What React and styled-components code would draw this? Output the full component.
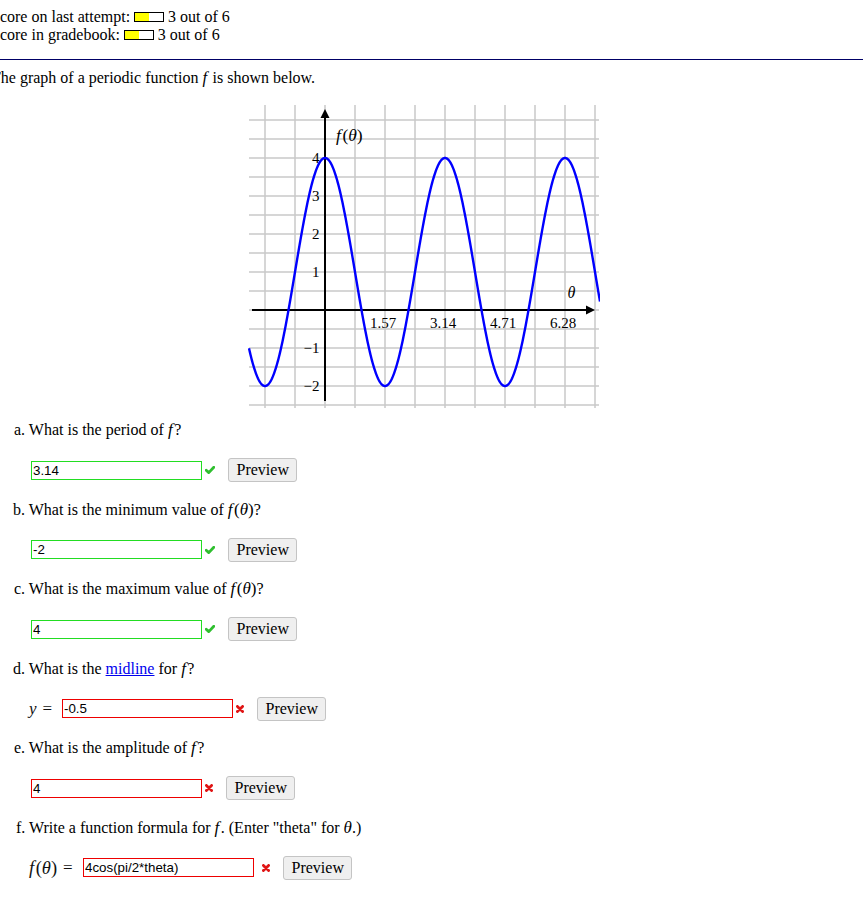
import React from "react";
import styled, { createGlobalStyle } from "styled-components";

const Global = createGlobalStyle`
  html, body { margin: 0; padding: 0; background: #fff; }
  body { font-family: "Liberation Serif", "Times New Roman", serif; font-size: 16px; color: #000; overflow: hidden; }
`;

const Page = styled.div`
  width: 863px;
  padding-top: 8px;
`;

const Header = styled.div`
  margin-left: -9px;
  line-height: 17.5px;
`;

const ScoreLine = styled.div`
  white-space: nowrap;
`;

const Bar = styled.span`
  display: inline-block;
  box-sizing: border-box;
  width: 30px;
  height: 10px;
  border: 1px solid #000;
  background: #fff;
  overflow: hidden;
`;

const BarFill = styled.span`
  display: block;
  height: 100%;
  background: #ffff00;
`;

const Rule = styled.div`
  margin-top: 16px;
  margin-bottom: 9px;
  border-top: 1px solid #000066;
`;

const Intro = styled.div`
  margin-left: -9px;
  line-height: 17.5px;
`;

const M = styled.span`
  font-style: italic;
  font-family: "Liberation Serif", "Times New Roman", serif;
  font-size: ${(p) => p.$size || 17}px;
  padding-right: ${(p) => (p.$pad ? 1.5 : 0)}px;
`;

const Up = styled.span`
  font-size: ${(p) => p.$size || 17}px;
`;

const GraphWrap = styled.div`
  margin-top: 17px;
  padding-left: 248px;
  height: 306px;
`;

const Questions = styled.div`
  margin-top: 11.5px;
`;

const Question = styled.div`
  margin-bottom: ${(p) => p.$after}px;
`;

const Label = styled.div`
  padding-left: ${(p) => p.$indent}px;
  line-height: 18px;
  height: 18px;
  white-space: nowrap;
`;

const Link = styled.a`
  color: #0000ee;
  text-decoration: underline;
`;

const Row = styled.div`
  margin-top: ${(p) => p.$top}px;
  height: 24px;
  display: flex;
  align-items: center;
  padding-left: 30px;
`;

const Prefix = styled.span`
  display: flex;
  align-items: center;
  width: ${(p) => p.$w}px;
  margin-left: -1px;
  flex: none;
  color: #111;
  white-space: nowrap;
  line-height: 20px;
`;

const Eq = styled.span`
  margin-left: ${(p) => p.$gap}px;
  font-size: 17px;
`;

const Input = styled.input`
  box-sizing: border-box;
  width: 171px;
  height: 19px;
  margin: 0 0 0 1px;
  padding: 0 1px;
  border: 1px solid ${(p) => (p.$ok ? "#22dd22" : "#ee0000")};
  outline: none;
  font-family: "Liberation Sans", Arial, sans-serif;
  font-size: 13.33px;
  color: #000;
  background: #fff;
  flex: none;
`;

const Mark = styled.span`
  display: inline-flex;
  align-items: center;
  justify-content: center;
  width: ${(p) => p.$w}px;
  margin-left: ${(p) => p.$ml}px;
  flex: none;
`;

const Button = styled.button`
  box-sizing: border-box;
  height: 24px;
  margin-left: ${(p) => p.$ml}px;
  padding: 0 7.5px;
  border: 1px solid #c4c4c4;
  border-radius: 3px;
  background: #efefef;
  font-family: "Liberation Serif", "Times New Roman", serif;
  font-size: 16px;
  color: #000;
  line-height: 22px;
  flex: none;
`;

const Check = () => (
  <svg width="10" height="8" viewBox="0 0 10 8">
    <path d="M1.2 4.2 L3.8 6.6 L8.8 1.3" fill="none" stroke="#2fbf2f" strokeWidth="2.8" strokeLinecap="round" strokeLinejoin="round" />
  </svg>
);

const Cross = () => (
  <svg width="8" height="8" viewBox="0 0 8 8">
    <path d="M1.4 1.4 L6.6 6.6 M6.6 1.4 L1.4 6.6" fill="none" stroke="#e01515" strokeWidth="2.8" strokeLinecap="round" />
  </svg>
);

const Graph = () => {
  const vx = [];
  for (let x = 265; x <= 595; x += 30) vx.push(x);
  const hy = [];
  for (let y = 120; y <= 406; y += 19) hy.push(y);
  const pts = [];
  for (let x = 249; x <= 600; x += 0.5) {
    const y = 310 - 38 * (3 * Math.cos((2 * Math.PI * (x - 325)) / 120) + 1);
    pts.push(`${x.toFixed(1)},${y.toFixed(2)}`);
  }
  const yl = [
    ["4", 158], ["3", 196], ["2", 234], ["1", 272], ["\u22121", 348], ["\u22122", 386],
  ];
  const xl = [["1.57", 383], ["3.14", 443], ["4.71", 503], ["6.28", 563]];
  return (
    <svg width="352" height="306" viewBox="248 104 352 306" style={{ display: "block" }}>
      <g stroke="#c8c8c8" strokeWidth="1.5">
        {vx.map((x) => (
          <line key={"v" + x} x1={x} y1={105} x2={x} y2={408} />
        ))}
        {hy.map((y) => (
          <line key={"h" + y} x1={249} y1={y} x2={599} y2={y} />
        ))}
      </g>
      <g stroke="#000" strokeWidth="2">
        <line x1={252} y1={310} x2={588} y2={310} />
        <line x1={325} y1={401} x2={325} y2={116} />
      </g>
      <polygon points="595,310 586,305.5 586,314.5" fill="#000" />
      <polygon points="325,109 320.5,118 329.5,118" fill="#000" />
      <polyline points={pts.join(" ")} fill="none" stroke="#0000ff" strokeWidth="2.4" />
      <g fontFamily="'Liberation Serif', 'Times New Roman', serif" fontSize="15" fill="#000">
        {yl.map(([t, y]) => (
          <text key={t} x={319.5} y={y + 5} textAnchor="end">{t}</text>
        ))}
        {xl.map(([t, x]) => (
          <text key={t} x={x} y={328} textAnchor="middle">{t}</text>
        ))}
        <text x={571.5} y={298} textAnchor="middle" fontStyle="italic" fontSize="16">θ</text>
        <text x={336} y={141} fontStyle="italic" fontSize="17.5">
          f<tspan fontStyle="normal" dx="1.5">(</tspan>θ<tspan fontStyle="normal">)</tspan>
        </text>
      </g>
    </svg>
  );
};

const FT = ({ size }) => (
  <>
    <M $size={size} $pad>f</M><Up $size={size}>(</Up><M $size={size}>θ</M><Up $size={size}>)</Up>
  </>
);

const questions = [
  {
    label: <>a. What is the period of <M $pad>f</M>?</>,
    value: "3.14", ok: true, indent: 14,
  },
  {
    label: <>b. What is the minimum value of <FT />?</>,
    value: "-2", ok: true, indent: 13,
  },
  {
    label: <>c. What is the maximum value of <FT />?</>,
    value: "4", ok: true, indent: 14,
  },
  {
    label: <>d. What is the <Link href="#">midline</Link> for <M $pad>f</M>?</>,
    value: "-0.5", ok: false, indent: 13,
    prefix: { w: 32, content: <><M>y</M><Eq $gap={6}>=</Eq></> },
  },
  {
    label: <>e. What is the amplitude of <M $pad>f</M>?</>,
    value: "4", ok: false, indent: 14,
  },
  {
    label: <>f. Write a function formula for <M $pad>f</M>. (Enter "theta" for <M>θ</M>.)</>,
    value: "4cos(pi/2*theta)", ok: false, indent: 16,
    prefix: { w: 53, content: <><FT size={18.5} /><Eq $gap={6}>=</Eq></> },
    wide: true,
  },
];

export default function App() {
  return (
    <Page>
      <Global />
      <Header>
        <ScoreLine>
          Score on last attempt: <Bar><BarFill style={{ width: "50%" }} /></Bar> 3 out of 6
        </ScoreLine>
        <ScoreLine>
          Score in gradebook: <Bar><BarFill style={{ width: "50%" }} /></Bar> 3 out of 6
        </ScoreLine>
      </Header>
      <Rule />
      <Intro>
        The graph of a periodic function <M $pad $size={16.5}>f</M> is shown below.
      </Intro>
      <GraphWrap>
        <Graph />
      </GraphWrap>
      <Questions>
        {questions.map((q, i) => (
          <Question key={i} $after={18.5}>
            <Label $indent={q.indent}>{q.label}</Label>
            <Row $top={19}>
              {q.prefix && <Prefix $w={q.prefix.w}>{q.prefix.content}</Prefix>}
              <Input readOnly value={q.value} $ok={q.ok} />
              <Mark $w={q.ok ? 10 : 8} $ml={q.wide ? 8 : 3}>{q.ok ? <Check /> : <Cross />}</Mark>
              <Button $ml={13}>Preview</Button>
            </Row>
          </Question>
        ))}
      </Questions>
    </Page>
  );
}
